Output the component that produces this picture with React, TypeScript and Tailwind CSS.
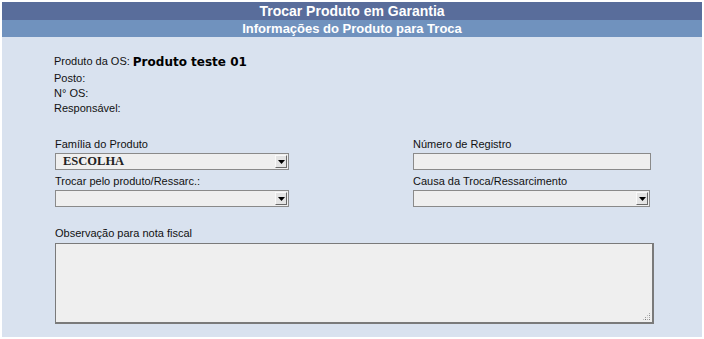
import React from "react";

function Arrow() {
  return (
    <div className="ml-auto mr-[1px] h-[13px] w-[12px] bg-[#e4e4e4] border-r border-b border-[#6a6a6a] border-t border-l border-t-[#fafafa] border-l-[#fafafa] flex items-center justify-center">
      <svg width="7" height="4" viewBox="0 0 7 4">
        <polygon points="0,0 7,0 3.5,4" fill="#000" />
      </svg>
    </div>
  );
}

function Select({ text, w }: { text?: string; w: string }) {
  return (
    <div className={`${w} h-[17px] bg-[#efefef] border border-[#8a8a8a] flex items-center`}>
      <span className="pl-[7px] text-[12.5px] font-bold text-[#222] leading-none" style={{ fontFamily: '"Liberation Serif", serif' }}>
        {text}
      </span>
      <Arrow />
    </div>
  );
}

export default function App() {
  const sans = { fontFamily: '"Liberation Sans", Arial, sans-serif' };
  return (
    <div className="bg-white w-[704px] h-[339px] pt-[2px] pl-[2px]" style={sans}>
      <div className="w-[700px]">
        <div className="h-[18px] bg-[#596d9b] text-white font-bold text-[14px] leading-[18px] text-center">
          Trocar Produto em Garantia
        </div>
        <div className="h-[17px] bg-[#7092be] text-white font-bold text-[13px] leading-[17px] text-center">
          Informações do Produto para Troca
        </div>
        <div className="h-[300px] bg-[#d9e2ef] pl-[52px] pt-[16px] text-[11px] text-[#111]">
          <div className="h-[17px] flex items-center">
            <span>Produto da OS:</span>
            <span className="ml-[3px] font-bold text-[12px] text-black" style={{ fontFamily: '"DejaVu Sans", sans-serif' }}>
              Produto teste 01
            </span>
          </div>
          <div className="h-[16px] flex items-center">Posto:</div>
          <div className="h-[15px] flex items-center">N° OS:</div>
          <div className="h-[15px] flex items-center">Responsável:</div>

          <div className="mt-[21px] flex">
            <div className="w-[359px] pl-[1px]">
              <div className="h-[14px] flex items-center">Família do Produto</div>
              <div className="mt-[2px]">
                <Select text="ESCOLHA" w="w-[234px]" />
              </div>
              <div className="mt-[4px] h-[14px] flex items-center">Trocar pelo produto/Ressarc.:</div>
              <div className="mt-[2px]">
                <Select w="w-[234px]" />
              </div>
            </div>
            <div>
              <div className="h-[14px] flex items-center">Número de Registro</div>
              <div className="mt-[2px] w-[238px] h-[17px] bg-[#efefef] border border-[#8a8a8a]" />
              <div className="mt-[4px] h-[14px] flex items-center">Causa da Troca/Ressarcimento</div>
              <div className="mt-[2px]">
                <Select w="w-[237px]" />
              </div>
            </div>
          </div>

          <div className="mt-[19px] pl-[1px]">
            <div className="h-[14px] flex items-center">Observação para nota fiscal</div>
            <div className="relative mt-[3px] w-[599px] h-[81px] bg-[#efefef] border border-[#7a7a7a] border-b-2 border-r-2">
              <svg className="absolute right-[1px] bottom-[1px]" width="9" height="9" viewBox="0 0 9 9">
                <rect x="7" y="1" width="1" height="1" fill="#aaa" />
                <rect x="7" y="3" width="1" height="1" fill="#888" />
                <rect x="5" y="3" width="1" height="1" fill="#bbb" />
                <rect x="3" y="5" width="1" height="1" fill="#999" />
                <rect x="5" y="5" width="1" height="1" fill="#ccc" />
                <rect x="7" y="5" width="1" height="1" fill="#aaa" />
                <rect x="1" y="7" width="1" height="1" fill="#bbb" />
                <rect x="3" y="7" width="1" height="1" fill="#777" />
                <rect x="5" y="7" width="1" height="1" fill="#aaa" />
                <rect x="7" y="7" width="1" height="1" fill="#888" />
              </svg>
            </div>
          </div>
        </div>
      </div>
    </div>
  );
}
